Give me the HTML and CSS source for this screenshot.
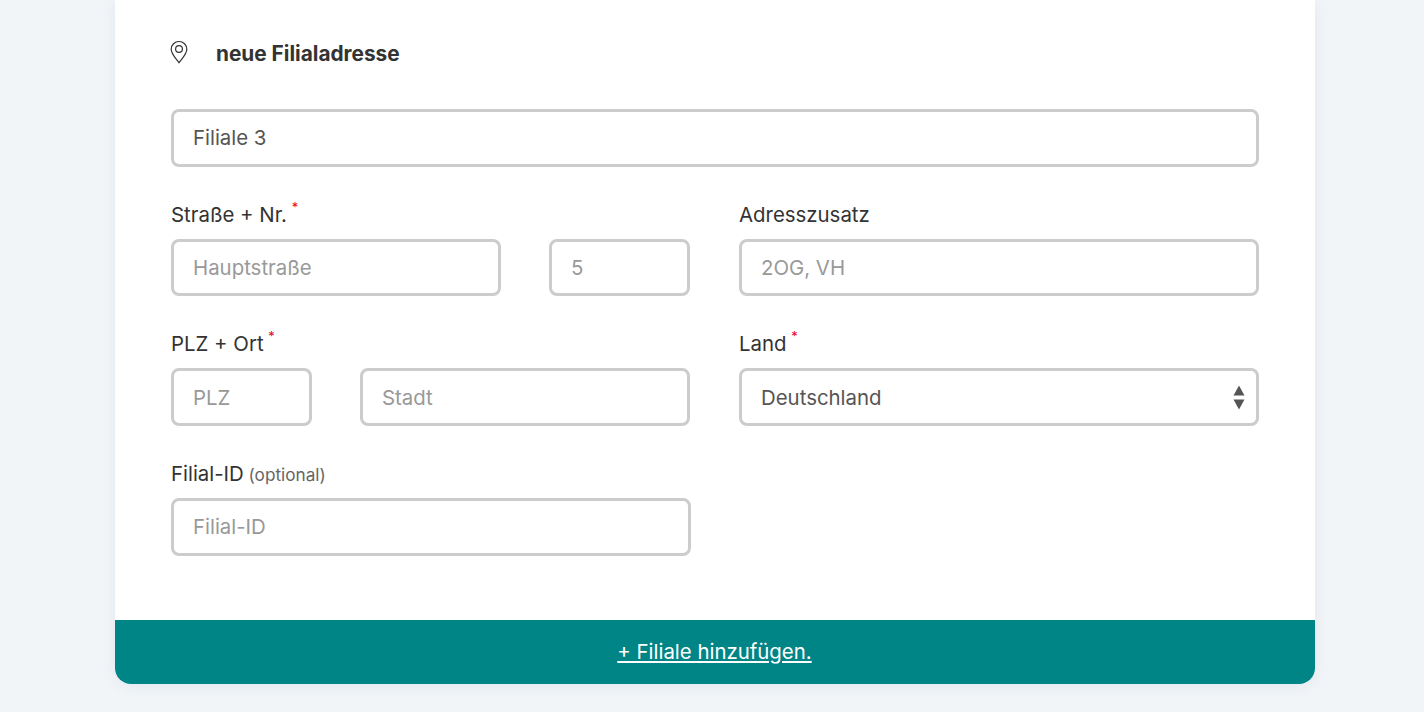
FILE: index.html
```html
<!DOCTYPE html>
<html lang="de">
<head>
<meta charset="utf-8">
<title>neue Filialadresse</title>
<link rel="stylesheet" href="styles.css">
</head>
<body>
<main class="card">
  <form class="form">
    <header class="heading">
      <svg class="pin" width="18" height="24" viewBox="0 0 18 24" fill="none" stroke="#333" stroke-width="1.2"><path d="M9 22.6C6.6 18.9 1.2 14.6 1.2 9.3a7.8 7.8 0 0 1 15.6 0C16.8 14.6 11.4 18.9 9 22.6Z"/><circle cx="9" cy="9" r="3.4"/></svg>
      <h2 class="heading-text">neue Filialadresse</h2>
    </header>
    <input class="field field-wide" type="text" value="Filiale 3">
    <div class="grid">
      <div class="group">
        <label class="label">Straße + Nr. <sup class="req">*</sup></label>
        <div class="pair pair-street">
          <input class="field" type="text" placeholder="Hauptstraße">
          <input class="field" type="text" placeholder="5">
        </div>
      </div>
      <div class="group">
        <label class="label">Adresszusatz</label>
        <input class="field" type="text" placeholder="2OG, VH">
      </div>
      <div class="group">
        <label class="label">PLZ + Ort <sup class="req">*</sup></label>
        <div class="pair pair-city">
          <input class="field" type="text" placeholder="PLZ">
          <input class="field" type="text" placeholder="Stadt">
        </div>
      </div>
      <div class="group">
        <label class="label">Land <sup class="req">*</sup></label>
        <div class="select-wrap">
          <select class="field select"><option>Deutschland</option></select>
          <svg class="arrows" width="12" height="25" viewBox="0 0 12 25" fill="#555"><path d="M6 0.5 11.5 10.5H.5Z"/><path d="M.5 14.5h11L6 24.5Z"/></svg>
        </div>
      </div>
      <div class="group">
        <label class="label">Filial-ID <span class="optional">(optional)</span></label>
        <input class="field" type="text" placeholder="Filial-ID">
      </div>
    </div>
  </form>
  <footer class="footer"><a class="add-link" href="#">+ Filiale hinzufügen.</a></footer>
</main>
</body>
</html>
```
FILE: styles.css
```css
* { box-sizing: border-box; }
html, body { margin: 0; height: 712px; overflow: hidden; }
body {
  background: #f1f5f8;
  font-family: "Inter", "Liberation Sans", sans-serif;
  color: #333;
}
.card {
  width: 1200px;
  height: 684px;
  margin-left: 115px;
  background: #fff;
  border-radius: 0 0 16px 16px;
  box-shadow: 0 2px 14px rgba(60, 80, 110, 0.08);
  display: flex;
  flex-direction: column;
}
.form { flex: 1; padding: 38px 56px 0; }
.heading { display: flex; align-items: center; gap: 28px; height: 29px; margin-bottom: 42px; }
.pin { display: block; margin: -1px 0 0 -1px; }
.heading-text { margin: 1px 0 0; font-size: 20.8px; font-weight: 700; color: #333; line-height: 29px; }
.field {
  display: block;
  width: 100%;
  height: 57.6px;
  padding: 0 19px;
  background: #fff;
  border: 3px solid #ccc;
  border-radius: 8px;
  font: 400 20.4px "Inter", "Liberation Sans", sans-serif;
  color: #555;
  outline: none;
}
.field::placeholder { color: #999; opacity: 1; }
.grid { display: grid; grid-template-columns: 520px 520px; column-gap: 48px; row-gap: 0; margin-top: 34px; }
.group { height: 129.7px; }
.label { display: block; height: 38px; font-size: 20.4px; line-height: 28px; color: #333; }
.req { color: #e8001c; font-size: 13px; line-height: 0; vertical-align: 10px; margin-left: -1px; }
.optional { font-size: 17.2px; color: #666; margin-left: -1px; }
.pair { display: grid; column-gap: 48px; }
.pair-street { grid-template-columns: 330px 141px; }
.pair-city { grid-template-columns: 141px 330px; }
.select-wrap { position: relative; }
.select { appearance: none; -webkit-appearance: none; }
.arrows { position: absolute; right: 14px; top: 17px; }
.footer {
  height: 64px;
  padding: 0 1px 2px 0;
  background: #008587;
  border-radius: 0 0 16px 16px;
  display: flex;
  align-items: center;
  justify-content: center;
}
.add-link { color: #fff; font-size: 20.4px; text-decoration: underline; }
```
